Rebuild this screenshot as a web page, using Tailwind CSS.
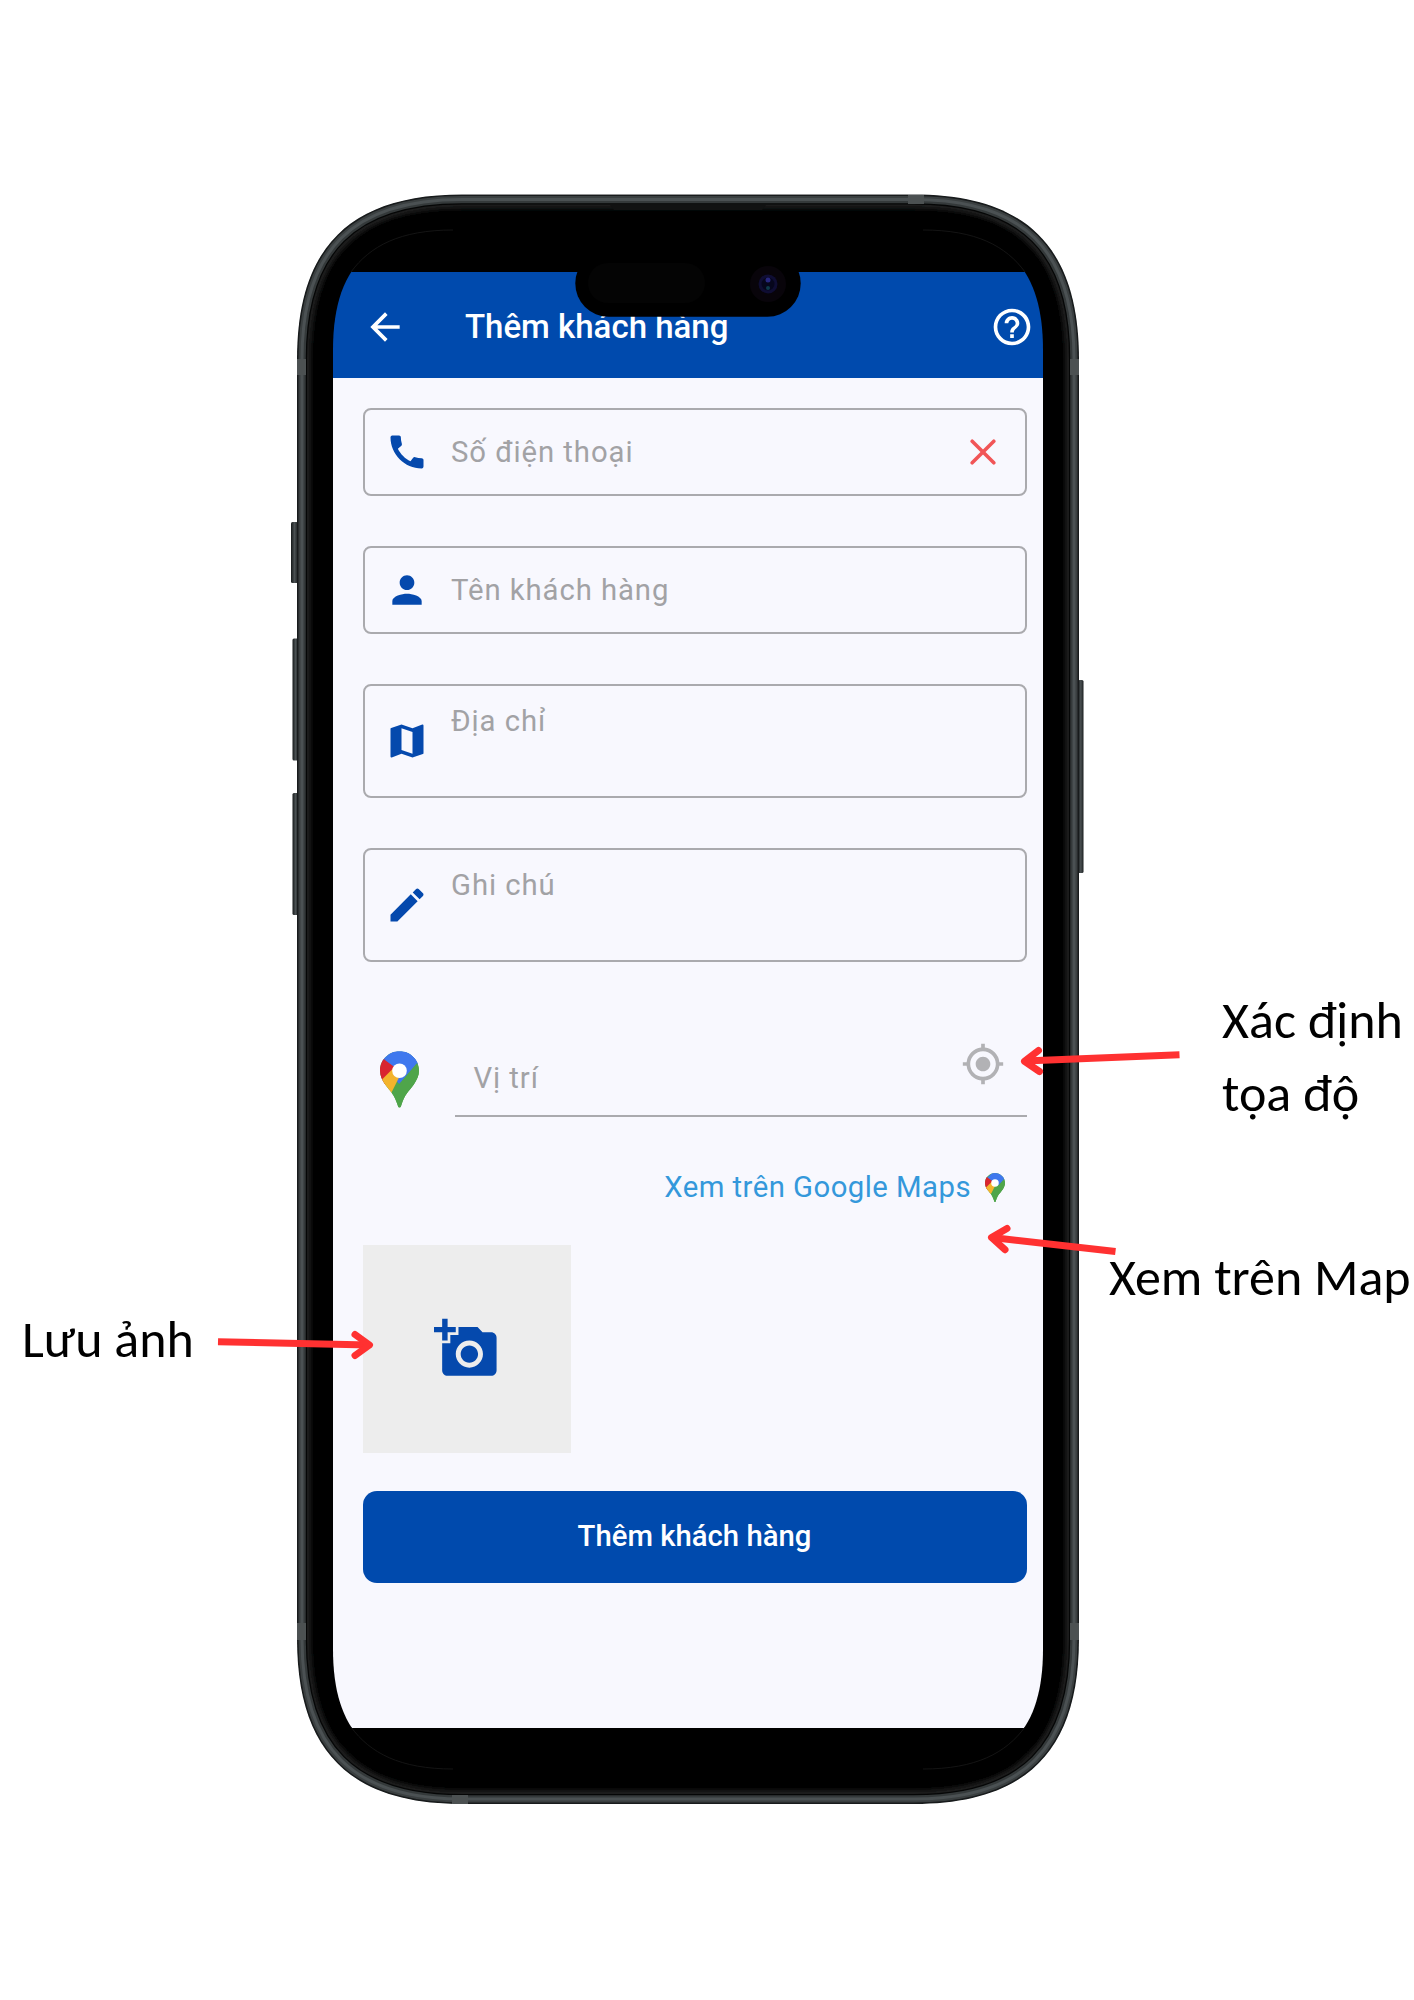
<!DOCTYPE html>
<html lang="vi">
<head>
<meta charset="utf-8">
<title>Thêm khách hàng</title>
<script src="https://cdn.jsdelivr.net/npm/@tailwindcss/browser@4"></script>
</head>
<body class="bg-white">
<div class="relative w-[1414px] h-[2000px] overflow-hidden pl-[333px] pt-[230px] font-['Roboto',sans-serif]">

  <!-- Screen -->
  <main class="w-[710px] h-[1539px] rounded-[80px] overflow-hidden bg-black pt-[42px] pb-[41.5px] flex flex-col text-[29.3px] leading-[34px]">
    <header class="h-[106px] shrink-0 bg-[#004aad] flex items-center pl-[30px] pr-[9px] pt-[3px] text-white">
      <svg class="size-[44px]" viewBox="0 0 24 24" fill="currentColor"><path d="M20 11H7.83l5.59-5.59L12 4l-8 8 8 8 1.41-1.41L7.83 13H20v-2z"/></svg>
      <h1 class="ml-[58px] flex-1 text-[33px] font-medium">Thêm khách hàng</h1>
      <svg class="size-[44px]" viewBox="0 0 24 24" fill="currentColor"><path d="M11 18h2v-2h-2v2zm1-16C6.48 2 2 6.48 2 12s4.48 10 10 10 10-4.48 10-10S17.52 2 12 2zm0 18c-4.41 0-8-3.59-8-8s3.59-8 8-8 8 3.59 8 8-3.59 8-8 8zm0-14c-2.21 0-4 1.79-4 4h2c0-1.1.9-2 2-2s2 .9 2 2c0 2-3 1.75-3 5h2c0-2.25 3-2.5 3-5 0-2.21-1.79-4-4-4z"/></svg>
    </header>

    <form class="flex-1 bg-[#f8f8fe] pt-[30px] pl-[29.5px] pr-[16.5px] flex flex-col tracking-[0.92px] text-[#a2a2a5]">
      <div class="h-[88px] border-2 border-[#aaaaae] rounded-[8px] flex items-center pl-[20px] pr-[29px]">
        <svg class="size-[44px] text-[#0549ad]" viewBox="0 0 24 24" fill="currentColor"><path d="M20.01 15.38c-1.23 0-2.42-.2-3.53-.56-.35-.12-.74-.03-1.01.24l-1.57 1.97c-2.83-1.35-5.48-3.9-6.89-6.83l1.95-1.66c.27-.28.35-.67.24-1.02-.37-1.11-.56-2.3-.56-3.53 0-.54-.45-.99-.99-.99H4.19C3.65 3 3 3.24 3 3.99 3 13.28 10.73 21 20.01 21c.71 0 .99-.63.99-1.18v-3.45c0-.54-.45-.99-.99-.99z"/></svg>
        <span class="ml-[22.5px] -mt-px flex-1">Số điện thoại</span>
        <svg class="size-[26px]" viewBox="0 0 26 26" fill="none" stroke="#f15557" stroke-width="3.6" stroke-linecap="round"><path d="M2.2 2.2l21.600 21.600M23.800 2.200L2.200 23.800"/></svg>
      </div>
      <div class="mt-[50px] h-[88px] border-2 border-[#aaaaae] rounded-[8px] flex items-center pl-[20px]">
        <svg class="size-[44px] text-[#0549ad]" viewBox="0 0 24 24" fill="currentColor"><path d="M12 12c2.21 0 4-1.79 4-4s-1.79-4-4-4-4 1.79-4 4 1.79 4 4 4zm0 2c-2.67 0-8 1.34-8 4v2h16v-2c0-2.66-5.33-4-8-4z"/></svg>
        <span class="ml-[22.5px]">Tên khách hàng</span>
      </div>
      <div class="mt-[50px] h-[114px] border-2 border-[#aaaaae] rounded-[8px] flex items-center pl-[20px]">
        <svg class="size-[44px] text-[#0549ad]" viewBox="0 0 24 24" fill="currentColor"><path d="M20.5 3l-.16.03L15 5.1 9 3 3.36 4.9c-.21.07-.36.25-.36.48V20.5c0 .28.22.5.5.5l.16-.03L9 18.9l6 2.1 5.64-1.9c.21-.07.36-.25.36-.48V3.5c0-.28-.22-.5-.5-.5zM15 19l-6-2.11V5l6 2.11V19z"/></svg>
        <span class="ml-[22.5px] mt-[18px] self-start">Địa chỉ</span>
      </div>
      <div class="mt-[50px] h-[114px] border-2 border-[#aaaaae] rounded-[8px] flex items-center pl-[20px]">
        <svg class="size-[44px] text-[#0549ad]" viewBox="0 0 24 24" fill="currentColor"><path d="M3 17.25V21h3.75L17.81 9.94l-3.75-3.75L3 17.25zM20.71 7.04c.39-.39.39-1.02 0-1.41l-2.34-2.34c-.39-.39-1.02-.39-1.41 0l-1.83 1.83 3.75 3.75 1.83-1.83z"/></svg>
        <span class="ml-[22.5px] mt-[18px] self-start">Ghi chú</span>
      </div>

      <div class="mt-[77px] h-[78px] flex items-start">
        <svg class="ml-[17px] mt-[12px] w-[39px] h-[57px]" viewBox="0 0 40 58">
          <defs><clipPath id="pin"><path d="M20 0C9 0 0 8.800 0 19.800c0 5.500 2 9.700 5.300 14.200C10.500 41 15 44.500 18 55c.4 1.600.9 3 2 3s1.600-1.400 2-3c3-10.500 7.500-14 12.700-21C38 29.500 40 25.300 40 19.800 40 8.800 31 0 20 0z"/></clipPath></defs>
          <g clip-path="url(#pin)"><path fill="#4fa54a" d="M0 0h40v58H0z"/><path fill="#3f78ee" d="M0 0h40v11L20 34 0 9z"/><path fill="#d9252f" d="M-2 7L7 9l13 11-22 22z"/><path fill="#f3b42c" d="M-3 34L20 11v15L8 50z"/><path fill="#3f78ee" d="M5 9L16-2 40-2v15L27 25 20 20z"/><path fill="#4fa54a" d="M11.500 43L38 12l4 8-18 38H10z"/></g>
          <circle cx="20" cy="20" r="7.500" fill="#fff"/>
        </svg>
        <div class="ml-[36px] flex-1 h-full border-b-2 border-[#aaaaae] flex items-start pl-[19px] pr-[22px]">
          <span class="flex-1 mt-[22px]">Vị trí</span>
          <svg class="size-[44px] mt-[2.500px] text-[#b2b2b5]" viewBox="0 0 24 24" fill="currentColor"><path d="M12 8c-2.210 0-4 1.790-4 4s1.790 4 4 4 4-1.790 4-4-1.790-4-4-4zm8.940 3A8.994 8.994 0 0 0 13 3.060V1h-2v2.060A8.994 8.994 0 0 0 3.060 11H1v2h2.060A8.994 8.994 0 0 0 11 20.940V23h2v-2.060A8.994 8.994 0 0 0 20.940 13H23v-2h-2.060zM12 19c-3.870 0-7-3.130-7-7s3.130-7 7-7 7 3.130 7 7-3.130 7-7 7z"/></svg>
        </div>
      </div>

      <div class="mt-[53px] flex justify-end items-center pr-[22px] h-[34px] text-[#3498db] tracking-[0.46px]">
        <span>Xem trên Google Maps</span>
        <svg class="ml-[13.500px] w-[20px] h-[29px]" viewBox="0 0 40 58"><g clip-path="url(#pin)"><path fill="#4fa54a" d="M0 0h40v58H0z"/><path fill="#d9252f" d="M-2 7L7 9l13 11-22 22z"/><path fill="#f3b42c" d="M-3 34L20 11v15L8 50z"/><path fill="#3f78ee" d="M5 9L16-2 40-2v15L27 25 20 20z"/><path fill="#4fa54a" d="M11.500 43L38 12l4 8-18 38H10z"/></g><circle cx="20" cy="20" r="7.500" fill="#fff"/></svg>
      </div>

      <div class="mt-[41px] size-[208px] bg-[#ededed] flex items-center justify-center">
        <svg class="size-[65.300px] text-[#0549ad]" viewBox="0 0 24 24" fill="currentColor"><path d="M3 4V1h2v3h3v2H5v3H3V6H0V4h3zm3 6V7h3V4h7l1.830 2H21c1.100 0 2 .9 2 2v12c0 1.100-.9 2-2 2H5c-1.100 0-2-.9-2-2V10h3zm7 9c2.760 0 5-2.240 5-5s-2.240-5-5-5-5 2.240-5 5 2.240 5 5 5zm-3.200-5c0 1.770 1.430 3.200 3.200 3.200s3.200-1.430 3.200-3.200-1.430-3.200-3.200-3.200-3.200 1.430-3.200 3.200z"/></svg>
      </div>

      <button type="button" class="mt-[38px] h-[92px] rounded-[14px] bg-[#004aad] text-white font-medium tracking-normal pb-[2px]">Thêm khách hàng</button>
    </form>
  </main>

  <!-- Phone body, drawn over the screen corners -->
  <svg class="absolute inset-0 pointer-events-none" width="1414" height="2000" viewBox="0 0 1414 2000">
    <defs>
      <linearGradient id="btn" x1="0" x2="1" y1="0" y2="0"><stop offset="0" stop-color="#15191a"/><stop offset=".5" stop-color="#4a5052"/><stop offset="1" stop-color="#1a1e1f"/></linearGradient>
      <filter id="soft" x="-5%" y="-5%" width="110%" height="110%"><feGaussianBlur stdDeviation="2"/></filter>
      <path id="body" d="M297 359C297 247 350 194.500 462 194.500H914C1026 194.500 1079 247 1079 359V1639C1079 1751 1026 1804 914 1804H462C350 1804 297 1751 297 1639Z"/>
      <path id="hole" d="M333 350C333 267 370 230 453 230H923C1006 230 1043 267 1043 350V1649C1043 1732 1006 1769 923 1769H453C370 1769 333 1732 333 1649Z"/>
      <mask id="ring"><use href="#body" fill="#fff"/><use href="#hole" fill="#000"/></mask>
      <clipPath id="bodyclip"><use href="#body"/></clipPath>
    </defs>
    <g fill="url(#btn)">
      <rect x="291" y="522" width="7" height="61" rx="1.500"/>
      <rect x="292.500" y="638.500" width="6" height="122" rx="1.500"/>
      <rect x="292.500" y="793" width="6" height="122" rx="1.500"/>
      <rect x="1078" y="680" width="5.500" height="193" rx="1.500"/>
    </g>
    <g mask="url(#ring)">
      <use href="#body" fill="#000"/>
      <g clip-path="url(#bodyclip)" fill="none">
        <use href="#body" stroke="#1d1f1f" stroke-width="28" filter="url(#soft)"/>
        <use href="#body" stroke="#050606" stroke-width="20"/>
        <use href="#body" stroke="#34393a" stroke-width="17.500"/>
        <use href="#body" stroke="#4b5153" stroke-width="13"/>
        <use href="#body" stroke="#3a3f40" stroke-width="7"/>
        <use href="#body" stroke="#181b1c" stroke-width="3"/>
        <g fill="#4c5152">
          <path d="M297 359h9v16h-9zM1070 359h9v16h-9zM297 1623h9v17h-9zM1070 1623h9v17h-9zM908 194h16v10h-16zM452 1795h16v9h-16z"/>
        </g>
      </g>
      <path d="M610 205H766l-4 5H614z" fill="#111212"/>
    </g>
    <path d="M351 272C370 246 400 230 453 230M923 230C976 230 1006 246 1025 272M351 1727C370 1753 400 1769 453 1769M923 1769C976 1769 1006 1753 1025 1727" fill="none" stroke="#1d1d1d" stroke-width=".7"/>
    <rect x="575.300" y="250" width="225.400" height="66.700" rx="33.300" fill="#000"/>
    <rect x="588" y="263" width="117" height="40" rx="20" fill="#040404"/>
    <circle cx="768" cy="284" r="18" fill="#08040a"/>
    <circle cx="768" cy="284" r="9.500" fill="#0f0d33"/>
    <circle cx="768" cy="284" r="6.500" fill="#06061c"/>
    <circle cx="768" cy="280" r="2.500" fill="#27277e"/>
    <circle cx="768" cy="288" r="2" fill="#0d3a4a"/>

    <!-- Callout arrows -->
    <g fill="none" stroke="#ff3131" stroke-width="7" stroke-linejoin="round">
      <path d="M1179.500 1054.700L1025 1061"/>
      <path d="M1115.500 1251.500L992 1237.500"/>
      <path d="M218 1341.700L369 1345"/>
      <g stroke-linecap="round"><path d="M1038.500 1050.500L1024.500 1061.300 1039.500 1071.500M1007 1228.500L991.500 1237.500 1005 1249.700M355 1334.500L369.500 1345 355 1355.500"/></g>
    </g>
  </svg>

  <!-- Callout labels -->
  <div class="absolute left-[1222px] top-[984px] text-black whitespace-nowrap font-['Carlito','Open_Sans',sans-serif] text-[52px] leading-[73px]">Xác định<br>tọa độ</div>
  <div class="absolute left-[1109px] top-[1241px] text-black whitespace-nowrap font-['Carlito','Open_Sans',sans-serif] text-[52px] leading-[73px]">Xem trên Map</div>
  <div class="absolute left-[22px] top-[1303px] text-black whitespace-nowrap font-['Carlito','Open_Sans',sans-serif] text-[52px] leading-[73px]">Lưu ảnh</div>
</div>
</body>
</html>
